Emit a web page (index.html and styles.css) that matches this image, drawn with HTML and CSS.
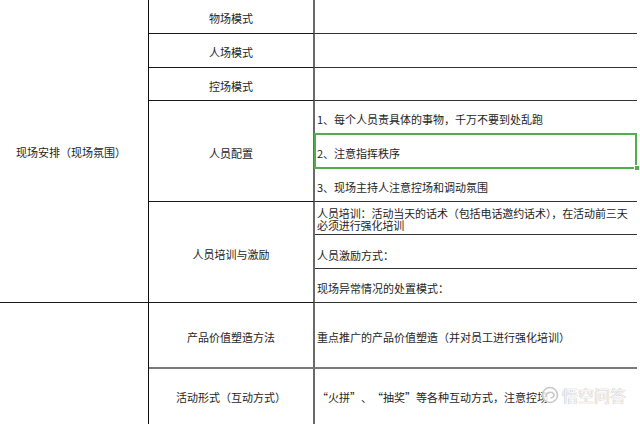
FILE: index.html
```html
<!DOCTYPE html>
<html lang="zh">
<head>
<meta charset="utf-8">
<link rel="stylesheet" href="styles.css">
</head>
<body>
<div class="sheet">
  <div class="cell c1 span-top">现场安排（现场氛围）</div>
  <div class="cell c1 span-bottom"></div>

  <div class="cell c2 r1">物场模式</div>
  <div class="cell c2 r2">人场模式</div>
  <div class="cell c2 r3">控场模式</div>
  <div class="cell c2 r4-6">人员配置</div>
  <div class="cell c2 r7-9 thick-b">人员培训与激励</div>
  <div class="cell c2 r10 gray-b">产品价值塑造方法</div>
  <div class="cell c2 r11">活动形式（互动方式）</div>

  <div class="cell c3 r1"></div>
  <div class="cell c3 r2"></div>
  <div class="cell c3 r3"></div>
  <div class="cell c3 r4">1、每个人员责具体的事物，千万不要到处乱跑</div>
  <div class="cell c3 r5 selected">2、注意指挥秩序</div>
  <div class="cell c3 r6">3、现场主持人注意控场和调动氛围</div>
  <div class="cell c3 r7 multi"><p class="para">人员培训：活动当天的话术（包括电话邀约话术），在活动前三天必须进行强化培训</p></div>
  <div class="cell c3 r8">人员激励方式：</div>
  <div class="cell c3 r9">现场异常情况的处置模式：</div>
  <div class="cell c3 r10 gray-b">重点推广的产品价值塑造（并对员工进行强化培训）</div>
  <div class="cell c3 r11"><span class="ql">“</span>火拼<span class="qr">”</span>、<span class="ql">“</span>抽奖<span class="qr">”</span>等各种互动方式，注意控场</div>

  <div class="watermark">
    <svg class="wm-logo" width="18" height="18" viewBox="0 0 18 18">
      <circle cx="9" cy="9" r="7.5" fill="rgba(255,255,255,0.85)" stroke="#c8c8c8" stroke-width="1.6"/>
      <path d="M5 10.5 C5 6.5 10 5 12.5 7.5 C14 9.5 12 12.5 9.5 11.5" fill="none" stroke="#c8c8c8" stroke-width="1.6"/>
    </svg>
    <span class="wm-text">悟空问答</span>
  </div>
</div>
</body>
</html>
```

FILE: styles.css
```css
html, body {
  margin: 0;
  padding: 0;
  background: #fff;
}

body {
  width: 640px;
  height: 424px;
  overflow: hidden;
}

.sheet {
  position: relative;
  display: grid;
  grid-template-columns: 149px 166px 322px;
  grid-template-rows: 34px 34px 33px 33px 35px 33px 33px 34px 34px 66px 60px;
  font-family: "Noto Sans CJK SC", "Noto Sans", sans-serif;
  font-size: 11px;
  color: #1e1e1e;
  line-height: 12px;
}

.cell {
  box-sizing: border-box;
  display: flex;
  align-items: center;
  padding-top: 3px;
  white-space: nowrap;
  border-bottom: 1px solid #1a1a1a;
}

.c1 {
  grid-column: 1;
  border-right: 1px solid #111;
  justify-content: center;
  padding-right: 6px;
}

.span-top { grid-row: 1 / 10; padding-top: 2px; }
.span-bottom { grid-row: 10 / 12; border-bottom: none; }

.c2 {
  grid-column: 2;
  justify-content: center;
  border-right: 2px solid #6a6a6a;
}

.c3 {
  grid-column: 3;
  padding-left: 2px;
  border-bottom-color: #333;
}

.r1 { grid-row: 1; }
.r2 { grid-row: 2; }
.r3 { grid-row: 3; }
.r4 { grid-row: 4; }
.r5 { grid-row: 5; }
.r6 { grid-row: 6; }
.r7 { grid-row: 7; }
.r8 { grid-row: 8; padding-top: 6px; }
.r9 { grid-row: 9; padding-top: 5px; }
.r10 { grid-row: 10; }
.r11 { grid-row: 11; border-bottom: none; align-items: flex-start; padding-top: 22px; }
.r4-6 { grid-row: 4 / 7; }
.r7-9 { grid-row: 7 / 10; }

.gray-b { border-bottom: 2px solid #7a7a7a; }

.multi {
  white-space: normal;
  padding-top: 2px;
  padding-right: 2px;
}

.para {
  margin: 0;
  line-height: 12.5px;
  letter-spacing: -0.1px;
}

.ql, .qr {
  display: inline-block;
  width: 11px;
}
.ql { text-align: right; }
.qr { text-align: left; }

.selected { position: relative; }
.selected::after {
  content: "";
  position: absolute;
  left: -1px;
  top: -1px;
  width: 323px;
  height: 36px;
  box-sizing: border-box;
  border: 2px solid #4fae4a;
}
.selected::before {
  content: "";
  position: absolute;
  right: -3px;
  bottom: -3px;
  width: 4px;
  height: 4px;
  background: #4fae4a;
  border: 1px solid #fff;
  z-index: 1;
}

.watermark {
  position: absolute;
  left: 541px;
  top: 386px;
  display: flex;
  align-items: center;
  gap: 3px;
}

.wm-text {
  font-size: 16px;
  line-height: 18px;
  color: rgba(255, 255, 255, 0.9);
  text-shadow: 0 0 1px #b8b8b8, 0 0 1px #b8b8b8;
  letter-spacing: 0;
}
```
